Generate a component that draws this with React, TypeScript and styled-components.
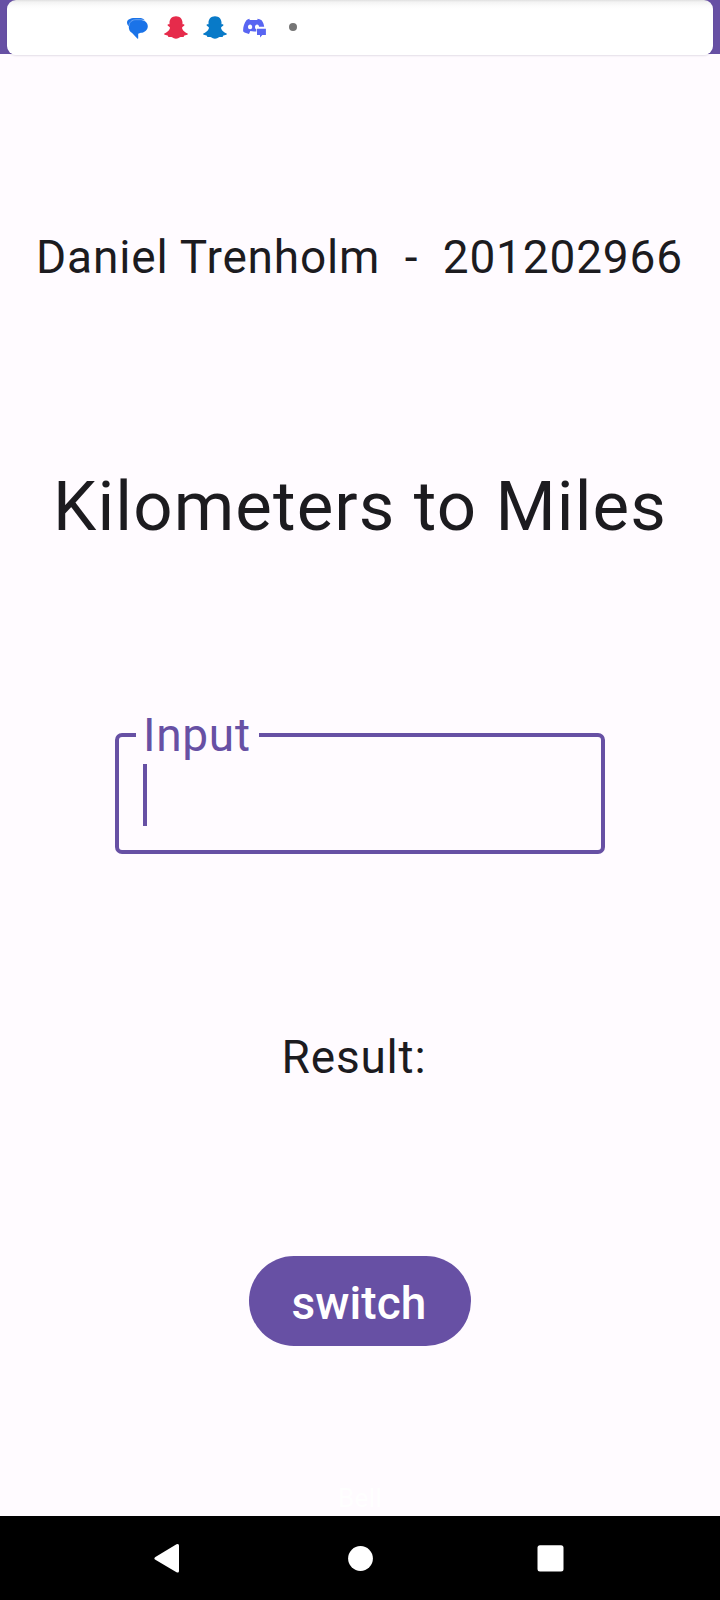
import React from 'react';
import styled, { createGlobalStyle } from 'styled-components';

const Global = createGlobalStyle`
  * { box-sizing: border-box; }
  body { margin: 0; background: #fffbff; }
`;

const Screen = styled.div`
  width: 720px;
  height: 1600px;
  display: flex;
  flex-direction: column;
  overflow: hidden;
  background: #fffbff;
  color: #1c1b1f;
  font-family: Roboto, sans-serif;
`;

const StatusBar = styled.header`
  height: 54px;
  padding: 0 7px;
  background: #6750a4;
`;

const Notification = styled.div`
  height: 55px;
  padding: 0 0 1px 119px;
  display: flex;
  align-items: center;
  border-radius: 9px;
  background: linear-gradient(#e0e0e0 0, #f3f3f3 2px, #fcfcfc 6px, #fff 9px);
  box-shadow: 0 1px 2px rgba(40, 30, 70, 0.13);
`;

const StatusIcon = styled.svg<{ $gap?: number }>`
  width: 26px;
  height: 26px;
  flex: none;
  margin-right: ${(p) => p.$gap ?? 13}px;
`;

const Dot = styled.span`
  width: 8px;
  height: 8px;
  margin-left: 9px;
  border-radius: 50%;
  background: #757575;
`;

const Content = styled.main`
  height: 1462px;
  display: flex;
  flex-direction: column;
  align-items: center;
`;

const Line = styled.p<{ $size: number; $top: number; $shift?: number; $spacing: number }>`
  margin: ${(p) => p.$top}px 0 0 ${(p) => p.$shift ?? 0}px;
  font-size: ${(p) => p.$size}px;
  line-height: 60px;
  letter-spacing: ${(p) => p.$spacing}px;
  white-space: pre;
`;

const Field = styled.fieldset`
  width: 490px;
  height: 137px;
  margin: 180px 0 0;
  padding: 0 24px;
  border: 4px solid #6750a4;
  border-radius: 7px;
`;

const FieldLabel = styled.legend`
  width: 123px;
  height: 36px;
  margin-left: -7px;
  padding: 0 0 0 7px;
  color: #6750a4;
  font-size: 46px;
  line-height: 36px;
  letter-spacing: 0.7px;
`;

const Caret = styled.div`
  width: 3.6px;
  height: 62px;
  margin-top: 11px;
  background: #6750a4;
`;

const SwitchButton = styled.button`
  width: 222px;
  height: 90px;
  margin: 169px 0 0;
  padding: 4px 2px 0 0;
  border: 0;
  border-radius: 45px;
  background: #6750a4;
  color: #fff;
  font: 500 46px/52px Roboto, sans-serif;
  letter-spacing: 0.1px;
`;

const Carrier = styled.p`
  margin: auto 0 2px;
  color: #fff;
  font-size: 26px;
  line-height: 32px;
  letter-spacing: 0.4px;
`;

const NavBar = styled.nav`
  height: 84px;
  padding: 0 154px;
  display: flex;
  align-items: center;
  justify-content: space-between;
  background: #000;
`;

const NavIcon = styled.svg`
  width: 30px;
  height: 30px;
  fill: #fff;
`;

const Ghost = ({ color }: { color: string }) => (
  <StatusIcon viewBox="0 0 26 26">
    <path
      fill={color}
      d="M13 2.2C9 2.2 6.5 5 6.5 8.6v1.7c-.7 0-1.7-.2-1.9.5-.3 1 1.2 1.700 2.2 2.400.7 1.700-1.900 4.800-4.900 6-.9.4-1 1.200-.1 1.600l2.700.7c.7.3.4 1.400 1.100 1.500 1.200.2 2.200-.2 3.500.3 1.200.6 2.200 1.500 3.900 1.500s2.700-.9 3.900-1.500c1.300-.5 2.300-.1 3.500-.3.7-.1.400-1.200 1.100-1.500l2.700-.7c.9-.4.8-1.200-.1-1.600-3-1.200-5.600-4.300-4.900-6 1-.7 2.500-1.400 2.200-2.400-.2-.7-1.200-.5-1.900-.5V8.600C19.500 5 17 2.200 13 2.200z"
    />
  </StatusIcon>
);

export default function App() {
  return (
    <Screen>
      <Global />
      <StatusBar>
        <Notification>
          <StatusIcon $gap={10.9} viewBox="0 0 26 26">
            <path fill="#1a73e8" d="M1 8.5C1 5.700 4.500 4 8.500 4h5c2 0 3.800.5 5 1.700L10 7c-4 0-6.200 2-6.600 5.500C1.800 11.500 1 10 1 8.500z" />
            <path fill="#1a73e8" d="M10.500 5.900h3.700c4.500 0 7.600 2.700 7.600 6.300s-2.900 6.300-7 6.600l-2.600 1v4.400c0 .6-.5.7-.9.3l-5.200-5.400c-2.100-1.200-3.300-3.300-3.300-5.800 0-4.300 3.200-7.400 7.700-7.400z" />
            <path fill="none" stroke="#8ab6f5" strokeWidth=".7" d="M2.900 11.900c.4-3.900 3-6.200 7-6.200h5c1.500 0 2.800.4 3.800 1" />
          </StatusIcon>
          <Ghost color="#e62b4b" />
          <Ghost color="#087ac8" />
          <StatusIcon viewBox="0 0 26 26">
            <path
              fill="#5865f2"
              fillRule="evenodd"
              d="M8.700 4.800 8.500 6.100h8L16.300 4.800c1.600.2 3 .7 4.300 1.400 1.400 2 2.300 4 2.600 6.600h-5.100c-.3-1.500-1-2.200-2-2.200-1.200 0-2.100 1-2.100 2.300 0 1.100.5 1.900 1.300 2.200v2.300c-2 .3-4.200.2-6-.3l-1.300 2.800c-2-.3-4.100-1.100-5.800-2.400-.4-4.200.8-7.800 3.200-11.300 1-.7 2-1.200 3.300-1.400zM9.100 10.600c-1.200 0-2.100 1-2.100 2.300s.9 2.300 2.100 2.300 2.100-1 2.100-2.300-.9-2.300-2.100-2.300z"
            />
            <path fill="#5865f2" d="M16 14.700h8.900v6.200h-3.600L19 23.500v-2.600h-3z" />
          </StatusIcon>
          <Dot />
        </Notification>
      </StatusBar>
      <Content>
        <Line $size={46} $top={173} $shift={-1} $spacing={0.83}>{'Daniel Trenholm  -  201202966'}</Line>
        <Line $size={69} $top={190} $spacing={1.1}>Kilometers to Miles</Line>
        <Field>
          <FieldLabel>Input</FieldLabel>
          <Caret />
        </Field>
        <Line $size={46} $top={173} $shift={-12} $spacing={0.8}>Result:</Line>
        <SwitchButton>switch</SwitchButton>
        <Carrier>Bell</Carrier>
      </Content>
      <NavBar>
        <NavIcon viewBox="0 0 30 30">
          <path d="M1.4 13.900 22.500 1.300Q25 .2 25 2.500v25.500q0 2.300-2.500 1.200L1.400 16.800q-2.100-1.400 0-2.900z" />
        </NavIcon>
        <NavIcon viewBox="0 0 30 30"><circle cx="15.5" cy="15.5" r="12.4" /></NavIcon>
        <NavIcon viewBox="0 0 30 30"><rect x="1.5" y="2.2" width="26" height="26.2" rx="2.5" /></NavIcon>
      </NavBar>
    </Screen>
  );
}
